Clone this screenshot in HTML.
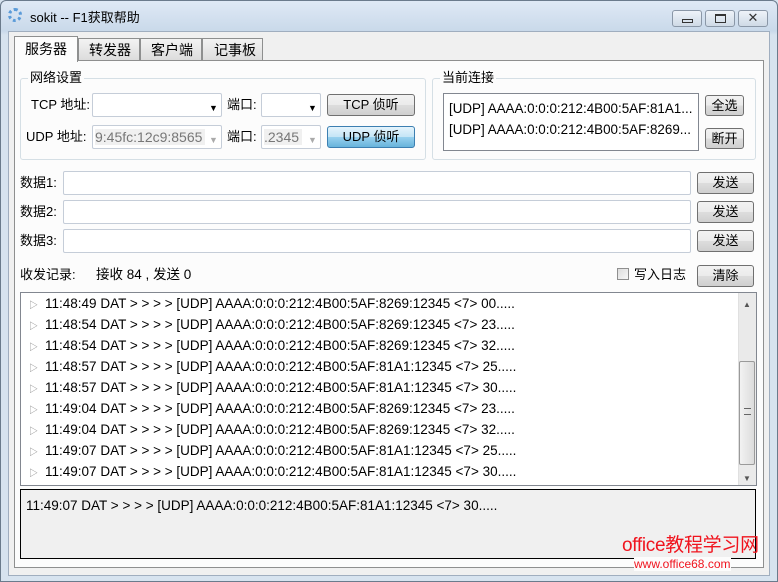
<!DOCTYPE html><html><head><meta charset="utf-8"><style>
*{box-sizing:border-box}body{margin:0;width:778px;height:582px;overflow:hidden;background:#d7e3ef;font-family:"Liberation Sans","Noto Sans CJK SC",sans-serif;font-size:13px;line-height:16px;color:#000}
.a{position:absolute}
.btn{position:absolute;border:1px solid #707070;border-radius:3px;background:linear-gradient(#f2f2f2,#ebebeb 50%,#dddddd 51%,#cfcfcf);text-align:center;font-size:13px}
.inp{position:absolute;background:#fff;border:1px solid #c5cdd8;border-radius:2px}
.grp{position:absolute;border:1px solid #d5dfe5;border-radius:3px}
.lg{position:absolute;background:#fcfcfc;padding:0 2px;font-size:13px}
.row{position:absolute;left:24px;font-size:13.5px;line-height:16px;white-space:nowrap;color:#000}
.row i{font-style:normal;color:#888;font-size:9px;margin-right:7px}
.arr{position:absolute;font-size:9px;color:#000}
</style></head><body>
<div class="a" style="left:0;top:0;width:778px;height:582px;border:1px solid #6b7b8c;border-radius:6px 6px 0 0;background:linear-gradient(#dfe9f5,#c9d9ea 30px,#d7e3ef 34px)"></div>
<div class="a" style="left:8px;top:8px;width:14px;height:14px;border-radius:50%;border:3px dotted #5b9bd8"></div>
<div class="a" style="left:30px;top:10px;font-size:13px">sokit -- F1获取帮助</div>
<div class="btn" style="left:672px;top:10px;width:30px;height:17px;border-color:#8a97a7;background:linear-gradient(#eef3f9,#cfdae6)"><div class="a" style="left:9px;top:8px;width:11px;height:4px;border:1px solid #333"></div></div>
<div class="btn" style="left:705px;top:10px;width:30px;height:17px;border-color:#8a97a7;background:linear-gradient(#eef3f9,#cfdae6)"><div class="a" style="left:9px;top:3px;width:11px;height:9px;border:1px solid #333;border-top-width:2px"></div></div>
<div class="btn" style="left:738px;top:10px;width:30px;height:17px;border-color:#8a97a7;background:linear-gradient(#eef3f9,#cfdae6);font-size:13px;line-height:14px;color:#333">✕</div>
<div class="a" style="left:8px;top:31px;width:762px;height:545px;background:#f0f0f0;border:1px solid #a0aebf"></div>
<div class="a" style="left:14px;top:60px;width:750px;height:508px;background:#fcfcfc;border:1px solid #8e8f8f"></div>
<div class="a" style="left:14px;top:36px;width:64px;height:26px;background:#fcfcfc;border:1px solid #8e8f8f;border-bottom:none;font-size:14px;padding:4px 0 0 10px">服务器</div>
<div class="a" style="left:78px;top:38px;width:62px;height:23px;background:linear-gradient(#f3f3f3,#dcdcdc);border:1px solid #8e8f8f;font-size:14px;padding:3px 0 0 10px">转发器</div>
<div class="a" style="left:140px;top:38px;width:62px;height:23px;background:linear-gradient(#f3f3f3,#dcdcdc);border:1px solid #8e8f8f;font-size:14px;padding:3px 0 0 10px">客户端</div>
<div class="a" style="left:202px;top:38px;width:61px;height:23px;background:linear-gradient(#f3f3f3,#dcdcdc);border:1px solid #8e8f8f;font-size:14px;padding:3px 0 0 11px">记事板</div>
<div class="grp" style="left:20px;top:78px;width:406px;height:82px"></div>
<div class="lg" style="left:28px;top:70px">网络设置</div>
<div class="a" style="left:31px;top:97px">TCP 地址:</div>
<div class="inp" style="left:92px;top:93px;width:130px;height:24px"><span class="arr" style="left:116px;top:6px">▼</span></div>
<div class="a" style="left:227px;top:97px">端口:</div>
<div class="inp" style="left:261px;top:93px;width:60px;height:24px"><span class="arr" style="left:46px;top:6px">▼</span></div>
<div class="btn" style="left:327px;top:94px;width:88px;height:22px;line-height:20px">TCP 侦听</div>
<div class="a" style="left:26px;top:129px">UDP 地址:</div>
<div class="inp" style="left:92px;top:125px;width:130px;height:24px;overflow:hidden"><span class="a" style="left:2px;top:3px;width:110px;background:#f0f0f0;color:#777;font-size:14px">9:45fc:12c9:8565</span><span class="arr" style="left:116px;top:6px;color:#aaa">▼</span></div>
<div class="a" style="left:227px;top:129px">端口:</div>
<div class="inp" style="left:261px;top:125px;width:60px;height:24px;overflow:hidden"><span class="a" style="left:2px;top:3px;width:38px;background:#f0f0f0;color:#777;font-size:14px">.2345</span><span class="arr" style="left:46px;top:6px;color:#aaa">▼</span></div>
<div class="btn" style="left:327px;top:126px;width:88px;height:22px;line-height:20px;border-color:#3c7fb1;background:linear-gradient(#e5f4fc,#c4e5f6 50%,#98d1ef 51%,#68b3db)">UDP 侦听</div>
<div class="grp" style="left:432px;top:78px;width:324px;height:82px"></div>
<div class="lg" style="left:440px;top:70px">当前连接</div>
<div class="a" style="left:443px;top:93px;width:256px;height:58px;background:#fff;border:1px solid #828790;padding:4px 0 0 5px;line-height:21px;font-size:13.4px;white-space:nowrap;overflow:hidden">[UDP] AAAA:0:0:0:212:4B00:5AF:81A1...<br>[UDP] AAAA:0:0:0:212:4B00:5AF:8269...</div>
<div class="btn" style="left:705px;top:95px;width:39px;height:21px;line-height:19px">全选</div>
<div class="btn" style="left:705px;top:128px;width:39px;height:21px;line-height:19px">断开</div>
<div class="a" style="left:20px;top:175px">数据1:</div><div class="inp" style="left:63px;top:171px;width:628px;height:24px"></div><div class="btn" style="left:697px;top:172px;width:57px;height:22px;line-height:20px">发送</div>
<div class="a" style="left:20px;top:204px">数据2:</div><div class="inp" style="left:63px;top:200px;width:628px;height:24px"></div><div class="btn" style="left:697px;top:201px;width:57px;height:22px;line-height:20px">发送</div>
<div class="a" style="left:20px;top:233px">数据3:</div><div class="inp" style="left:63px;top:229px;width:628px;height:24px"></div><div class="btn" style="left:697px;top:230px;width:57px;height:22px;line-height:20px">发送</div>
<div class="a" style="left:20px;top:267px">收发记录:</div>
<div class="a" style="left:96px;top:267px;font-size:13.5px">接收 84 , 发送 0</div>
<div class="a" style="left:617px;top:268px;width:12px;height:12px;border:1px solid #8f8f8f;background:linear-gradient(135deg,#ddd,#f8f8f8)"></div>
<div class="a" style="left:634px;top:267px">写入日志</div>
<div class="btn" style="left:697px;top:265px;width:57px;height:22px;line-height:20px">清除</div>
<div class="a" style="left:20px;top:292px;width:737px;height:194px;background:#fff;border:1px solid #828790;overflow:hidden">
<div class="row" style="top:3px;left:8px"><i>▷</i>11:48:49 DAT &gt; &gt; &gt; &gt; [UDP] AAAA:0:0:0:212:4B00:5AF:8269:12345 &lt;7&gt; 00.....</div>
<div class="row" style="top:24px;left:8px"><i>▷</i>11:48:54 DAT &gt; &gt; &gt; &gt; [UDP] AAAA:0:0:0:212:4B00:5AF:8269:12345 &lt;7&gt; 23.....</div>
<div class="row" style="top:45px;left:8px"><i>▷</i>11:48:54 DAT &gt; &gt; &gt; &gt; [UDP] AAAA:0:0:0:212:4B00:5AF:8269:12345 &lt;7&gt; 32.....</div>
<div class="row" style="top:66px;left:8px"><i>▷</i>11:48:57 DAT &gt; &gt; &gt; &gt; [UDP] AAAA:0:0:0:212:4B00:5AF:81A1:12345 &lt;7&gt; 25.....</div>
<div class="row" style="top:87px;left:8px"><i>▷</i>11:48:57 DAT &gt; &gt; &gt; &gt; [UDP] AAAA:0:0:0:212:4B00:5AF:81A1:12345 &lt;7&gt; 30.....</div>
<div class="row" style="top:108px;left:8px"><i>▷</i>11:49:04 DAT &gt; &gt; &gt; &gt; [UDP] AAAA:0:0:0:212:4B00:5AF:8269:12345 &lt;7&gt; 23.....</div>
<div class="row" style="top:129px;left:8px"><i>▷</i>11:49:04 DAT &gt; &gt; &gt; &gt; [UDP] AAAA:0:0:0:212:4B00:5AF:8269:12345 &lt;7&gt; 32.....</div>
<div class="row" style="top:150px;left:8px"><i>▷</i>11:49:07 DAT &gt; &gt; &gt; &gt; [UDP] AAAA:0:0:0:212:4B00:5AF:81A1:12345 &lt;7&gt; 25.....</div>
<div class="row" style="top:171px;left:8px"><i>▷</i>11:49:07 DAT &gt; &gt; &gt; &gt; [UDP] AAAA:0:0:0:212:4B00:5AF:81A1:12345 &lt;7&gt; 30.....</div>
<div class="a" style="left:717px;top:0;width:18px;height:192px;background:#eaeaea;border-left:1px solid #e0e0e0"></div>
<div class="a" style="left:722px;top:4px;font-size:8px;color:#555">▲</div>
<div class="a" style="left:718px;top:68px;width:16px;height:104px;border:1px solid #9a9a9a;border-radius:2px;background:linear-gradient(90deg,#f2f2f2,#dcdcdc)"><div class="a" style="left:4px;top:46px;width:7px;height:7px;border-top:1px solid #666;border-bottom:1px solid #666"></div></div>
<div class="a" style="left:722px;top:178px;font-size:8px;color:#555">▼</div>
</div>
<div class="a" style="left:20px;top:489px;width:736px;height:70px;background:#f0f0f0;border:1px solid #000;padding:8px 0 0 5px;font-size:13.5px">11:49:07 DAT &gt; &gt; &gt; &gt; [UDP] AAAA:0:0:0:212:4B00:5AF:81A1:12345 &lt;7&gt; 30.....</div>
<div class="a" style="left:622px;top:535px;font-size:19px;line-height:22px;color:#f0141e;letter-spacing:-0.3px">office教程学习网</div>
<div class="a" style="left:634px;top:557px;font-size:12px;line-height:14px;color:#f0141e;background:#fcfcfc">www.office68.com</div>
</body></html>
